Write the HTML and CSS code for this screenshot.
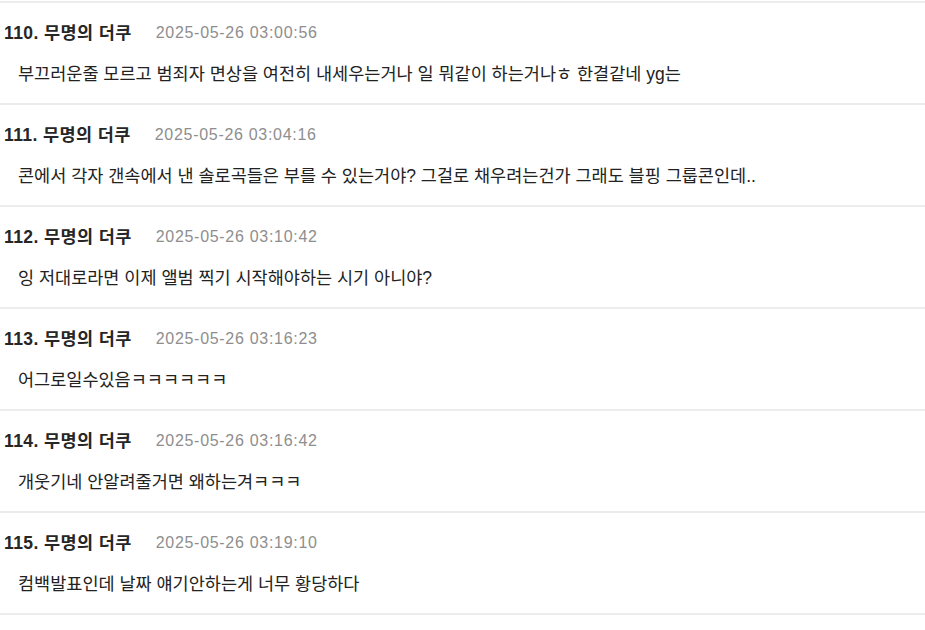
FILE: index.html
```html
<!DOCTYPE html>
<html lang="ko">
<head>
<meta charset="utf-8">
<link rel="stylesheet" href="styles.css">
</head>
<body>
<ul class="list">
  <li class="item">
    <div class="head"><span class="name">110. 무명의 더쿠</span><span class="date">2025-05-26 03:00:56</span></div>
    <p class="text">부끄러운줄 모르고 범죄자 면상을 여전히 내세우는거나 일 뭐같이 하는거나ㅎ 한결같네 yg는</p>
  </li>
  <li class="item">
    <div class="head"><span class="name">111. 무명의 더쿠</span><span class="date">2025-05-26 03:04:16</span></div>
    <p class="text">콘에서 각자 갠속에서 낸 솔로곡들은 부를 수 있는거야? 그걸로 채우려는건가 그래도 블핑 그룹콘인데..</p>
  </li>
  <li class="item">
    <div class="head"><span class="name">112. 무명의 더쿠</span><span class="date">2025-05-26 03:10:42</span></div>
    <p class="text">잉 저대로라면 이제 앨범 찍기 시작해야하는 시기 아니야?</p>
  </li>
  <li class="item">
    <div class="head"><span class="name">113. 무명의 더쿠</span><span class="date">2025-05-26 03:16:23</span></div>
    <p class="text">어그로일수있음ㅋㅋㅋㅋㅋㅋ</p>
  </li>
  <li class="item">
    <div class="head"><span class="name">114. 무명의 더쿠</span><span class="date">2025-05-26 03:16:42</span></div>
    <p class="text">개웃기네 안알려줄거면 왜하는겨ㅋㅋㅋ</p>
  </li>
  <li class="item">
    <div class="head"><span class="name">115. 무명의 더쿠</span><span class="date">2025-05-26 03:19:10</span></div>
    <p class="text">컴백발표인데 날짜 얘기안하는게 너무 황당하다</p>
  </li>
</ul>
</body>
</html>
```

FILE: styles.css
```css
html, body {
  margin: 0;
  padding: 0;
  background: #ffffff;
}
body {
  font-family: "Liberation Sans", "Noto Sans CJK KR", sans-serif;
  color: #222222;
}
.list {
  list-style: none;
  margin: 0;
  padding: 1px 0 0 0;
}
.list::before {
  content: "";
  display: block;
  height: 2px;
  background: #ececec;
}
.item {
  height: 100px;
  border-bottom: 2px solid #ececec;
  box-sizing: content-box;
  display: flex;
  flex-direction: column;
}
.head {
  margin-top: 18px;
  height: 24px;
  line-height: 24px;
  padding-left: 4px;
  display: flex;
  gap: 24px;
  align-items: center;
}
.name {
  font-size: 17.5px;
  font-weight: 700;
  letter-spacing: 0.4px;
  color: #262626;
}
.date {
  font-size: 16px;
  letter-spacing: 0.7px;
  color: #8e8e8e;
}
.text {
  margin: 17px 0 0 0;
  padding-left: 18px;
  font-size: 17.5px;
  line-height: 24px;
  color: #222222;
}
```
